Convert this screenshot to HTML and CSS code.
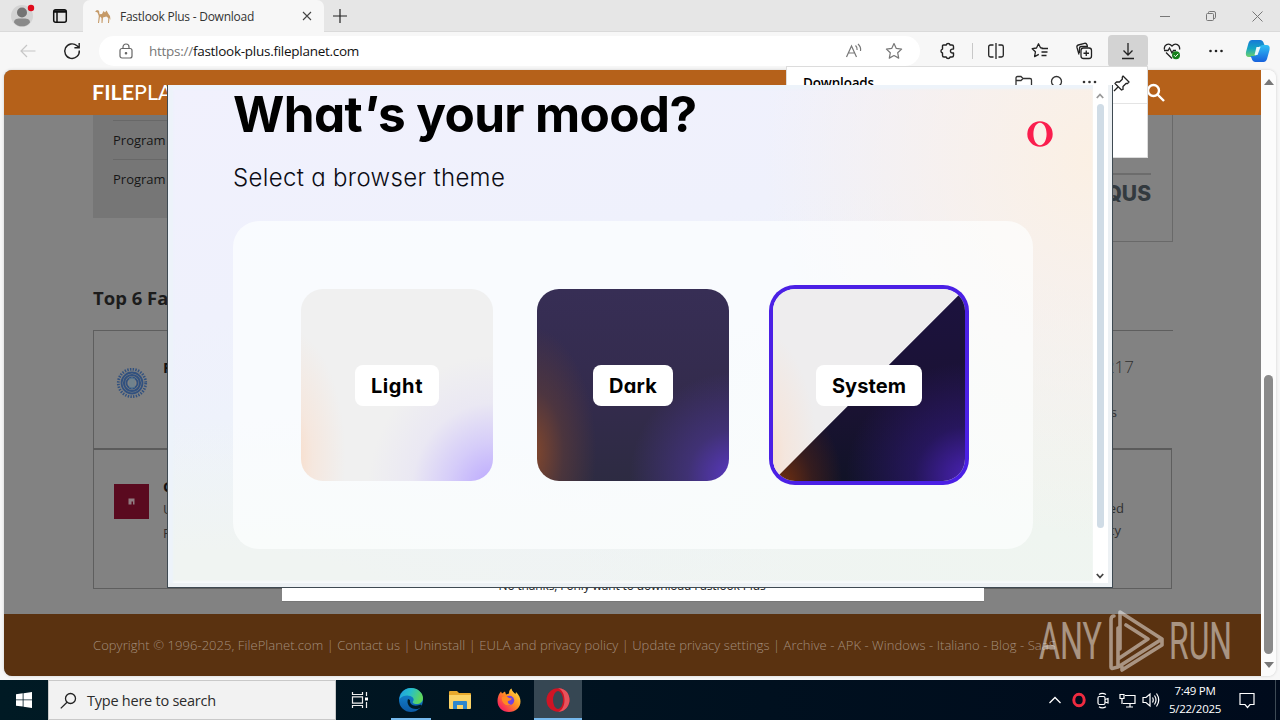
FILE: index.html
```html
<!DOCTYPE html>
<html lang="en">
<head>
<meta charset="utf-8">
<title>Fastlook Plus - Download</title>
<link rel="stylesheet" href="styles.css">
</head>
<body>
<div class="screen">
  <div class="browser">
    <div class="tabstrip">
      <div class="profile">
        <svg width="26" height="26" viewBox="0 0 26 26"><circle cx="13" cy="13" r="11" fill="#d3d3d3"/><circle cx="13" cy="9.500" r="5" fill="#747474"/><path d="M5 19.500c0-4 3.500-4 8-4s8 0 8 4c-2 3-5 3.800-8 3.800s-6-.8-8-3.800z" fill="#8a8a8a"/><circle cx="22" cy="5" r="3.200" fill="#e00b1c"/></svg>
      </div>
      <div class="workspaces">
        <svg width="16" height="16" viewBox="0 0 16 16" fill="none" stroke="#111" stroke-width="1.500"><rect x="1.700" y="1.700" width="12.600" height="12.600" rx="2"/><path d="M2 4h12M2 3h12M5 4v10"/></svg>
      </div>
      <div class="tab">
        <svg width="18" height="16" viewBox="0 0 18 16"><path d="M1 3.500L3 2l2 .8.500 3.500L8 6l1.500-3 1.500 1.500 1.500-2L14.500 6l1.500 2 .5 4-1-2-.5 5h-1l.3-5-2-1.500L9 9.500 8.500 15h-1V10L6 8.500 5 15H4l.8-7L3.500 4.500z" fill="#c59a68"/></svg>
        <span class="tab-title">Fastlook Plus - Download</span>
        <svg class="tab-close" width="10" height="10" viewBox="0 0 10 10" stroke="#444" stroke-width="1.100"><path d="M1 1l8 8M9 1L1 9"/></svg>
      </div>
      <svg class="newtab" width="14" height="14" viewBox="0 0 14 14" stroke="#222" stroke-width="1.200"><path d="M7 0v14M0 7h14"/></svg>
      <div class="wincontrols">
        <svg width="10" height="10" viewBox="0 0 10 10" stroke="#777"><path d="M0 5.500h10"/></svg>
        <svg width="10" height="10" viewBox="0 0 10 10" fill="none" stroke="#777"><rect x=".5" y="2.500" width="7" height="7" rx="1"/><path d="M2.500 2.500V1.500q0-1 1-1H8q1.500 0 1.500 1.500v4.500q0 1-1.500 1"/></svg>
        <svg width="11" height="11" viewBox="0 0 11 11" stroke="#777"><path d="M.5.5l10 10M10.500.5l-10 10"/></svg>
      </div>
    </div>

    <div class="toolbar">
      <svg class="back" width="16" height="14" viewBox="0 0 16 14" fill="none" stroke="#c6c6c6" stroke-width="1.200"><path d="M15.500 7H1M7 1L1 7l6 6"/></svg>
      <svg class="reload" width="18" height="18" viewBox="0 0 18 18" fill="none" stroke="#222" stroke-width="1.400"><path d="M16.300 8.500A7.300 7.300 0 1 1 14 3.800L16 5.600M16.200 1v4.800h-4.800"/></svg>
      <div class="address">
        <svg width="14" height="16" viewBox="0 0 14 16" fill="none" stroke="#666" stroke-width="1.200"><rect x="1" y="5.500" width="12" height="9.500" rx="2"/><path d="M4 5.500V4a3 3 0 0 1 6 0v1.500"/><circle cx="7" cy="10.200" r=".7" fill="#666"/></svg>
        <span class="url"><span class="scheme">https://</span>fastlook-plus.fileplanet.com</span>
        <svg class="aloud" width="18" height="16" viewBox="0 0 18 16" fill="none" stroke="#777" stroke-width="1.200"><path d="M1.500 14L6.500 3l5 11M3.300 10h6.400M10.500 2.500q2 1.800 1.600 4.500M13 1q3.300 3 2.500 7"/></svg>
        <svg width="18" height="18" viewBox="0 0 18 18" fill="none" stroke="#777" stroke-width="1.200" stroke-linejoin="round"><path d="M9 1.500l2.300 4.900 5.300.7-3.900 3.700 1 5.300L9 13.500l-4.700 2.600 1-5.300L1.400 7.100l5.300-.7z"/></svg>
      </div>
      <div class="tools">
        <span class="slot ext"><svg width="18" height="18" viewBox="0 0 18 18" fill="none" stroke="#222" stroke-width="1.400" stroke-linejoin="round"><path d="M4.500 3h2.700a2 2 0 0 1 3.900 0H13q1.500 0 1.500 1.500v2.600H13.400a1.900 1.900 0 0 0 0 3.900h1.100v2.500q0 1.500-1.500 1.500h-1.900a2 2 0 0 1-3.900 0H5q-1.500 0-1.500-1.500V11a2 2 0 0 1 0-3.900V4q0-1 1-1z"/></svg></span>
        <span class="divider"></span>
        <span class="slot"><svg width="18" height="18" viewBox="0 0 18 18" fill="none" stroke="#222" stroke-width="1.300"><path d="M6.500 3H3.500Q1.700 3 1.700 4.800v8.400Q1.700 15 3.500 15h3M11.500 3h3q1.800 0 1.800 1.800v8.400q0 1.800-1.800 1.800h-3M9 1v16"/></svg></span>
        <span class="slot"><svg width="18" height="18" viewBox="0 0 18 18" fill="none" stroke="#222" stroke-width="1.300" stroke-linejoin="round"><path d="M11.500 6L9.500 5.800 7.500 1.800 5.500 6 1.200 6.700l3.200 3.100-.8 4.800 4.200-2.200M10.500 6.500h6.500M10.500 10h6M10.500 13.500h5"/></svg></span>
        <span class="slot"><svg width="18" height="18" viewBox="0 0 18 18" fill="none" stroke="#222" stroke-width="1.300"><rect x="6" y="6" width="10.500" height="10.500" rx="2.500"/><path d="M11.250 8.500v5.500M8.500 11.250H14M4 12.500L2 5.500Q1.500 3.500 3.300 3L9.500 1.300Q11.300.9 12 2.800L12.300 4M4.500 11V6.500q0-2 2-2H13"/></svg></span>
        <span class="slot active"><svg width="16" height="18" viewBox="0 0 16 18" fill="none" stroke="#222" stroke-width="1.300"><path d="M8 1v12M3.500 8.500L8 13l4.500-4.500M2 16.500h12"/></svg></span>
        <span class="slot"><svg width="18" height="18" viewBox="0 0 18 18" fill="none" stroke="#222" stroke-width="1.300"><path d="M1.500 7.500C.5 3 5.500 0 9 4c3.500-4 8.500-1 7.500 3.500M1 8.500h4l1.500-2.500 2.500 5 1.500-2.500H13M3 10.500l6 6"/><circle cx="13" cy="13.200" r="4" fill="#16801b" stroke="none"/><path d="M11 13.200l1.500 1.500 2.700-2.900" stroke="#fff" stroke-width="1"/></svg></span>
        <span class="slot"><svg width="16" height="4" viewBox="0 0 16 4" fill="#222"><circle cx="2.500" cy="2" r="1.300"/><circle cx="8" cy="2" r="1.300"/><circle cx="13.500" cy="2" r="1.300"/></svg></span>
        <span class="slot copilot"><svg width="26" height="24" viewBox="0 0 26 24"><defs><linearGradient id="ca" x1="0" y1="0" x2="0" y2="1"><stop offset="0" stop-color="#1679d8"/><stop offset=".5" stop-color="#14a5c3"/><stop offset="1" stop-color="#6fd16a"/></linearGradient><linearGradient id="cb" x1="0" y1="0" x2="0" y2="1"><stop offset="0" stop-color="#2fc0f5"/><stop offset="1" stop-color="#1761dc"/></linearGradient></defs><path d="M7 1h8q3 0 4 4l1 2h-4q-2 0-3 3l-2 6q-1 2-4 2H4q-4 0-3-5L3.500 4Q4.500 1 7 1z" fill="url(#ca)"/><path d="M18.500 23h-8q-3 0-4-4l-1-2h4q2 0 3-3l2-6q1-2 4-2h3q4 0 3 5L22 20q-1 3-3.500 3z" fill="url(#cb)"/><path d="M11.500 8h4l-3 8h-3z" fill="#e9f8fb"/></svg></span>
      </div>
    </div>

    <div class="pagearea">
      <div class="page">
        <header class="site-header">
          <div class="logo"><b>FILE</b><span>PLA</span></div>
          <svg class="site-search" width="20" height="20" viewBox="0 0 20 20" fill="none" stroke="#fff" stroke-width="2.400"><circle cx="7.500" cy="7.500" r="5.500"/><path d="M11.500 11.500l6.500 6.500"/></svg>
        </header>
        <main class="content">
          <div class="toprow">
            <div class="specs"><p>Program</p><p>Program</p></div>
            <div class="comments"><div class="comments-inner"><span>DISQUS</span></div></div>
          </div>
          <h2 class="top6"><span>Top 6 Fa</span></h2>
          <div class="app-card first">
            <svg width="32" height="32" viewBox="0 0 32 32" fill="none" stroke="#31517f"><circle cx="16" cy="16" r="13.700" stroke-width="2.800" stroke-dasharray="1.400 1.300"/><circle cx="16" cy="16" r="10.500" stroke-width="1.800"/><circle cx="16" cy="16" r="8" stroke-width="2.200"/><circle cx="16" cy="16" r="5.500" stroke-width="1.800"/><path d="M14 11v10M16 10v12M18 11v10" stroke="#5f8297"/></svg>
            <div class="app-name"><b>F</b></div>
            <div class="app-side"><span class="count">217</span><span class="line">s</span></div>
          </div>
          <div class="app-card second">
            <svg width="35" height="35" viewBox="0 0 35 35"><path fill="#5a0a1f" d="M0 0h35v35H0z"/><path fill="#8f7b80" d="M14.500 14.500h6v6h-1.500v-3h-1.500v3h-3z"/></svg>
            <div class="app-name"><b>C</b><span>U</span><span>F</span></div>
            <div class="app-side"><span>ed</span><span class="ty">ty</span></div>
          </div>
        </main>
        <footer class="site-footer"><span>Copyright © 1996-2025, FilePlanet.com | Contact us | Uninstall | EULA and privacy policy | Update privacy settings | Archive - APK - Windows - Italiano - Blog - SaaS</span></footer>
      </div>
      <div class="scroll">
        <i class="tri up"></i>
        <i class="thumb"></i>
        <i class="tri down"></i>
      </div>
    </div>
  </div>

  <div class="taskbar">
    <div class="start"><svg width="16" height="16" viewBox="0 0 16 16" fill="#fff"><path d="M0 2.300L6.700 1.300v6.200H0zM7.500 1.200L16 0v7.500H7.500zM0 8.300h6.700v6.300L0 13.700zM7.500 8.300H16V16l-8.500-1.200z"/></svg></div>
    <div class="searchbox">
      <svg width="17" height="17" viewBox="0 0 17 17" fill="none" stroke="#222" stroke-width="1.300"><circle cx="10.500" cy="6.500" r="5"/><path d="M7 10.200L.8 16.400"/></svg>
      <span>Type here to search</span>
    </div>
    <div class="task view"><svg width="18" height="18" viewBox="0 0 18 18" fill="none" stroke="#eee" stroke-width="1.200"><path d="M1.500 1v2.500h10V1M1.500 17v-2.500h10V17M1.500 5.800h10v6.400h-10zM15.500 1v4M15.500 11v6"/><path d="M14 6.500h3v3h-3z" fill="#fff" stroke="none"/></svg></div>
    <div class="task open"><svg width="24" height="24" viewBox="0 0 24 24"><defs><linearGradient id="ea" x1="0" y1="0" x2="1" y2=".3"><stop offset="0" stop-color="#1f9de3"/><stop offset=".5" stop-color="#27bfca"/><stop offset="1" stop-color="#5ed65c"/></linearGradient><linearGradient id="eb" x1="0" y1="0" x2="0" y2="1"><stop offset="0" stop-color="#138cd7"/><stop offset="1" stop-color="#0c59a4"/></linearGradient></defs><circle cx="12" cy="12" r="12" fill="url(#eb)"/><path d="M.5 11C1.200 4.500 6 0 12 0c7 0 12 5 12 10 0 4-3 6-6.500 6-3 0-4.500-1.300-3.500-2.500 1-1.200.8-3-.2-4C11 6.500 4 6.500.5 11z" fill="url(#ea)"/><path d="M9 11c-2 5 2 10 8 10 2 0 3.800-.8 4.800-1.600C24 17.500 22 16 20.500 17 14 19 10.500 16 11 12z" fill="#001a24"/></svg></div>
    <div class="task plain"><svg width="22" height="20" viewBox="0 0 22 20"><path d="M0 2q0-1 1-1h7l2 2h11q1 0 1 1v14H0z" fill="#e8a92c"/><path d="M0 5h22v13q0 1-1 1H1q-1 0-1-1z" fill="#fbd367"/><path d="M4 19v-7q0-1 1-1h12q1 0 1 1v7h-4v-4H8v4z" fill="#2f87cd"/></svg></div>
    <div class="task plain"><svg width="24" height="24" viewBox="0 0 24 24"><defs><linearGradient id="fx" x1="1" y1="0" x2="0" y2="1"><stop offset="0" stop-color="#fff04a"/><stop offset=".45" stop-color="#ff9022"/><stop offset=".8" stop-color="#f92f55"/><stop offset="1" stop-color="#e31587"/></linearGradient></defs><path d="M2.500 5.500L4 3.500l1 2 3-2 1 3 3-1c0-3 1-4 2.500-5 .5 3 2.500 4 4 5.500L19 4c3 3 4.500 6 4.500 9.500C23.500 19.500 18.500 24 12 24S.5 19.500.5 13c0-3 .8-5.500 2-7.500z" fill="url(#fx)"/><circle cx="12.500" cy="12.500" r="4.700" fill="#7043df"/><path d="M5 9q4-2 7 1l3 .5q-1 2-4 2.500-1 3 3 3.500-5 2-7.500-1.500T5 9z" fill="#ff8a22"/></svg></div>
    <div class="task current"><svg width="24" height="24" viewBox="0 0 24 24"><ellipse cx="12" cy="12" rx="11.500" ry="11.800" fill="#cf1424"/><path d="M12 .2c9 0 11.500 7 11.500 11.800S20 23.800 12 23.800c4-1 6.500-6 6.500-11.800S16 1.500 12 .2z" fill="#e8535c"/><ellipse cx="12" cy="12" rx="5" ry="9" fill="#364753"/></svg></div>
    <div class="tray">
      <svg width="12" height="8" viewBox="0 0 12 8" fill="none" stroke="#fff" stroke-width="1.300"><path d="M.5 7L6 1.500 11.500 7"/></svg>
      <svg class="tray-opera" width="14" height="16" viewBox="0 0 14 16"><ellipse cx="7" cy="8" rx="5.200" ry="5.800" fill="none" stroke="#ef2b40" stroke-width="3"/></svg>
      <svg width="12" height="17" viewBox="0 0 12 17" fill="none" stroke="#fff" stroke-width="1.200"><rect x="1" y="4.500" width="7" height="8" rx="1.500"/><path d="M8 7.500l3-1v4.500l-3-1M2 2.500Q5 .3 9 2.500M2 14.700q3 2.200 7 0"/></svg>
      <svg class="tray-net" width="17" height="15" viewBox="0 0 17 15" fill="none" stroke="#fff" stroke-width="1.200"><path d="M6 2.500h10v8H4M1 1.500h4v4H1zM3 5.500V11M11 10.500V14M7 14h7"/></svg>
      <svg width="18" height="16" viewBox="0 0 18 16" fill="none" stroke="#fff" stroke-width="1.200"><path d="M1 5.500h3l4-3.500v12l-4-3.500H1zM10.500 5.500q1.500 2.500 0 5M12.500 3.500q3 4.500 0 9M14.500 1.500q4.500 6.500 0 13"/></svg>
      <div class="clock"><span>7:49 PM</span><span>5/22/2025</span></div>
      <svg width="16" height="17" viewBox="0 0 16 17" fill="none" stroke="#fff" stroke-width="1.200"><path d="M1 1.500h14v11h-4L8.500 15.500 6 12.500H1z"/></svg>
      <i class="peek"></i>
    </div>
  </div>

  <div class="offer"><span>No thanks, I only want to download Fastlook Plus</span></div>

  <div class="downloads">
    <div class="downloads-head">
      <strong>Downloads</strong>
      <svg width="18" height="16" viewBox="0 0 18 16" fill="none" stroke="#333" stroke-width="1.300"><path d="M1 14V3q0-1.500 1.500-1.500h3.500L8 3.500h7q1.500 0 1.500 1.500v9zM1 5.500h5l2-2"/></svg>
      <svg width="16" height="16" viewBox="0 0 16 16" fill="none" stroke="#333" stroke-width="1.300"><circle cx="7.500" cy="6.500" r="5"/><path d="M11 10l4 4"/></svg>
      <svg width="16" height="16" viewBox="0 0 16 16" fill="#333"><circle cx="3" cy="7" r="1.300"/><circle cx="8.500" cy="7" r="1.300"/><circle cx="14" cy="7" r="1.300"/></svg>
      <svg width="17" height="17" viewBox="0 0 17 17" fill="none" stroke="#222" stroke-width="1.300" stroke-linejoin="round"><path d="M10 1l6 6-1.500 1.500-1.500 0-3 3v3L8.500 15 2 8.500 3.500 7h3L9.300 4.200V2zM5 12L1 16"/></svg>
    </div>
  </div>

  <div class="opera-window">
    <div class="opera-page">
      <div class="opera-top">
        <div>
          <h1>What<span class="apos">'</span>s your mood?</h1>
          <p>Select a browser theme</p>
        </div>
        <svg class="opera-logo" width="26" height="26" viewBox="0 0 26 26"><path fill="#fa1e4e" fill-rule="evenodd" d="M13 .3a12.700 12.700 0 1 0 0 25.400a12.700 12.700 0 0 0 0-25.400zM13 1.800c3.800 0 6.600 5 6.600 11.200S16.800 24.200 13 24.200 6.400 19.200 6.400 13 9.200 1.800 13 1.800z"/></svg>
      </div>
      <div class="themes">
        <div class="theme light"><span>Light</span></div>
        <div class="theme dark"><span>Dark</span></div>
        <div class="theme system"><span>System</span></div>
      </div>
    </div>
    <div class="opera-scroll">
      <svg width="8" height="6" viewBox="0 0 8 6" fill="none" stroke="#999" stroke-width="1.800"><path d="M.8 5L4 1.500 7.200 5"/></svg>
      <i></i>
      <svg width="8" height="6" viewBox="0 0 8 6" fill="none" stroke="#444" stroke-width="1.800"><path d="M.8 1L4 4.500 7.200 1"/></svg>
    </div>
  </div>

  <svg class="watermark" width="210" height="72" viewBox="0 0 210 72">
    <text x="1" y="51" textLength="63" lengthAdjust="spacingAndGlyphs">ANY</text>
    <text x="131" y="51" textLength="63" lengthAdjust="spacingAndGlyphs">RUN</text>
    <g fill="none" stroke-width="3.600" stroke-linejoin="round" stroke-linecap="round"><path d="M82 41V4l42 27-44 28M76 8q-3 0-3 4v47q0 2 3 1l4-1V20M88 17l22 14L80 51M124 31v6L84 62v-3"/></g>
  </svg>
</div>
</body>
</html>
```
FILE: styles.css
```css
* { box-sizing: border-box; }
body { margin: 0; overflow: hidden; font-family: "Open Sans", "Noto Sans", sans-serif; }
svg { display: block; flex: none; }
h1, h2, p { margin: 0; }

.screen { position: relative; width: 1280px; height: 720px; display: flex; flex-direction: column; overflow: hidden; }
.browser { height: 680px; display: flex; flex-direction: column; background: #f7f7f7; }

/* Tab strip */
.tabstrip { height: 32px; display: flex; align-items: center; background: #e6e6e6; box-shadow: inset 0 -1px #dadada; }
.profile { margin-left: 9px; }
.workspaces { margin-left: 17px; }
.tab { width: 241px; height: 32px; margin-left: 15px; padding-left: 11px; display: flex; align-items: center; gap: 8px; background: #f7f7f7; border-radius: 7px 7px 0 0; }
.tab-title { font-size: 12px; letter-spacing: -.25px; color: #333; white-space: nowrap; }
.tab-close { margin-left: auto; margin-right: 12px; }
.newtab { margin-left: 9px; }
.wincontrols { margin-left: auto; margin-right: 17px; display: flex; align-items: center; gap: 36px; }

/* Toolbar */
.toolbar { height: 38px; display: flex; align-items: center; }
.back { margin-left: 20px; }
.reload { margin-left: 27px; }
.address { width: 821px; height: 30px; margin-left: 18px; padding: 0 17px 0 20px; display: flex; align-items: center; background: #fff; border-radius: 15px; }
.url { margin-left: 16px; font-size: 13.500px; letter-spacing: -.27px; color: #111; white-space: nowrap; }
.scheme { color: #777; }
.aloud { margin-left: auto; margin-right: 22px; }
.tools { flex: 1; display: flex; align-items: center; justify-content: flex-end; }
.slot { width: 44px; height: 32px; display: flex; align-items: center; justify-content: center; }
.slot.ext { width: 36px; margin-right: 6px; }
.divider { width: 1px; height: 16px; background: #c8c8c8; margin-right: 1px; }
.slot.active { width: 40px; margin: 0 2px; background: #d3d3d3; border-radius: 4px; }
.slot.copilot { width: 42px; padding-right: 2px; }

/* Web page */
.pagearea { height: 606px; margin: 0 4px; display: flex; border-radius: 8px; overflow: hidden; background: #fcfcfc; box-shadow: 0 0 3px #ccc; }
.page { width: 1257px; display: flex; flex-direction: column; background: #828282; }
.site-header { height: 45px; padding: 0 95px 0 88px; display: flex; align-items: center; justify-content: space-between; background: #b5611a; }
.logo { display: flex; font: 21.500px/1 Lato, sans-serif; color: #fff; }
.content { height: 499px; padding: 0 88px 0 89px; }
.toprow { height: 127px; display: flex; justify-content: space-between; }
.specs { width: 500px; height: 103px; padding: 5px 20px 0; background: #767676; }
.specs p { height: 39px; padding-top: 9px; border-top: 1px solid #686868; font-size: 13px; line-height: 20px; color: #161616; }
.comments { width: 560px; padding: 58px 21px 0 0; border: solid #696969; border-width: 0 1px 1px 0; }
.comments-inner { border-top: 2px solid #6c6c6c; text-align: right; font: 800 21px/38px Inter, sans-serif; color: #333a3f; }
.top6 { height: 88px; padding-top: 43px; font-size: 18.500px; line-height: 26px; color: #1c1c1c; }
.app-card { display: flex; border: 1px solid #5e5e5e; color: #303030; }
.app-card.first { height: 118px; padding: 36px 39px 0 22px; border-right: 0; border-bottom: 0; }
.app-card.second { width: 1079px; height: 141px; padding: 34px 47px 0 20px; border-top: 2px solid #5b5b5b; }
.app-name { margin-left: 14px; display: flex; flex-direction: column; font-size: 13px; line-height: 24px; }
.app-name b { font-size: 15px; line-height: 22px; color: #111; margin-top: -11px; }
.second .app-name b { margin-top: -9px; }
.first .app-name { margin-left: 15px; }
.app-side { margin-left: auto; display: flex; flex-direction: column; align-items: flex-end; font-size: 13px; line-height: 22px; }
.second .app-side { padding-top: 13px; }
.second .app-side .ty { padding-right: 3px; }
.count { font-size: 17px; font-weight: 300; margin-top: -11px; }
.line { margin-top: 23px; padding-right: 17px; }
.site-footer { height: 62px; padding-left: 89px; display: flex; align-items: center; background: #5a3210; color: #a38e7c; font-size: 13px; font-weight: 300; letter-spacing: .06px; white-space: nowrap; }
.scroll { width: 15px; padding: 9px 0 8px; display: flex; flex-direction: column; align-items: center; background: #fcfcfc; }
.tri { border: 5px solid transparent; }
.tri.up { border-top: 0; border-bottom: 6px solid #777; }
.tri.down { border-bottom: 0; border-top: 6px solid #777; margin-top: 8px; }
.thumb { width: 9px; height: 279px; margin-top: auto; border-radius: 5px; background: #8a8a8a; }

/* Taskbar */
.taskbar { height: 40px; display: flex; align-items: stretch; background: linear-gradient(90deg, #001a24, #00101f 60%, #000b1c); color: #fff; }
.start { width: 48px; display: flex; align-items: center; justify-content: center; }
.searchbox { width: 288px; padding-left: 11px; display: flex; align-items: center; gap: 10px; background: #f2f2f2; border: 1px solid #c9c9c9; color: #2c2c2c; font-size: 14.500px; letter-spacing: -.24px; white-space: nowrap; }
.task { width: 49px; display: flex; align-items: center; justify-content: center; }
.task.view { width: 50px; padding-right: 3px; }
.task.open { box-shadow: inset 0 -2px #76b9ed; width: 40px; margin: 0 5px; }
.task.plain { padding-right: 2px; }
.task.current { width: 48px; background: #364753; box-shadow: inset 0 -2px #76b9ed; }
.tray { flex: 1; display: flex; align-items: center; justify-content: flex-end; }
.tray-opera { margin: 0 11px; }
.tray-net { margin: 0 6px 0 10px; }
.clock { width: 52px; margin: 0 18px 0 9px; display: flex; flex-direction: column; align-items: center; font-size: 11.500px; line-height: 18px; letter-spacing: -.25px; white-space: nowrap; }
.peek { width: 1px; height: 40px; background: #3d4a55; margin: 0 4px 0 20px; }

/* Offer dialog behind the installer */
.offer { position: absolute; left: 282px; top: 560px; width: 702px; height: 42px; padding: 17px 2px 0 0; background: #fff; color: #222; text-align: center; font-size: 12px; line-height: 18px; letter-spacing: -.135px; border-bottom: 1px solid #777; }

/* Downloads flyout */
.downloads { position: absolute; left: 786px; top: 66px; width: 362px; height: 92px; background: #fff; border: 1px solid #dcdcdc; }
.downloads-head { height: 37px; padding: 0 17px 4px 16px; display: flex; align-items: center; gap: 16px; border-bottom: 1px solid #e4e4e4; font-size: 13.500px; letter-spacing: -.17px; }
.downloads-head strong { margin-right: auto; font-weight: 600; }

/* Opera installer */
.opera-window { position: absolute; left: 167px; top: 85px; width: 946px; height: 503px; display: flex; padding: 0 4px 4px 0; border: 1px solid #3f4a52; border-top: 0; background: #edf1f4; }
.opera-page { width: 925px; padding: 0 60px 0 65px; box-shadow: inset 5px 4px 2px #edf3fa, inset 0 -2px 2px #f7fafb;
  background: radial-gradient(ellipse 330px 380px at 100% 15%, #fbf0e4 0, #faf0e8aa 45%, #faf0e800 100%),
    radial-gradient(ellipse 500px 260px at 95% 90%, #eff5f0 0, #eff5f000 100%),
    radial-gradient(ellipse 600px 190px at 5% 105%, #f0f4f2 30%, #f0f4f200 100%),
    linear-gradient(168deg, #f1f1fd 0, #eff1fc 35%, #edf3fa 65%, #f0f4f3 90%); }
.opera-top { height: 136px; display: flex; justify-content: space-between; }
.opera-top h1 { height: 60px; font: 700 49.500px/59px Inter, sans-serif; font-feature-settings: "cv11"; letter-spacing: -.65px; color: #000; white-space: nowrap; }
.apos { display: inline-block; transform: skewX(-10deg); }
.opera-top p { padding-top: 17px; font: 300 24px/32px Inter, sans-serif; font-feature-settings: "cv11"; letter-spacing: .33px; color: #0c0c14; white-space: nowrap; }
.opera-logo { margin-top: 36px; margin-right: -20px; }
.themes { width: 800px; height: 328px; padding: 68px; display: flex; gap: 44px; border-radius: 26px; background: rgba(253, 255, 255, .68); }
.theme { width: 192px; height: 192px; display: flex; align-items: center; justify-content: center; border-radius: 22px; }
.theme span { height: 41px; padding: 1px 16px 0; border-radius: 8px; background: #fff; color: #000; font: 700 20px/41px Inter, sans-serif; font-feature-settings: "cv11"; }
.light span { letter-spacing: .6px; }
.dark span { letter-spacing: .25px; }
.light { background: radial-gradient(ellipse 125px 135px at 100% 105%, #b8a4ff 0, #c9bcfdb0 35%, #ddd6f950 65%, #f0f0f000 100%), radial-gradient(ellipse 60px 130px at -8% 88%, #fad8c0 0, #f8e2d4a0 45%, #f0f0f000 100%), #f0f0f0; }
.dark { background: radial-gradient(ellipse 105px 105px at 103% 98%, #5a38c4 0, #4a3590a0 45%, #372e5500 100%), radial-gradient(ellipse 65px 125px at -3% 85%, #85482c 0, #5c3b38a0 50%, #332b4c00 100%), linear-gradient(#372e55, #332b4c 60%, #2d2b42); }
.theme.system { position: relative; box-shadow: 0 0 0 4px #4b20e5; background: linear-gradient(135deg, #eeedee 49.800%, #eeedee00 50.100%), radial-gradient(ellipse 125px 115px at 103% 98%, #4b22b8 0, #33198090 45%, #1a123300 100%), radial-gradient(ellipse 60px 85px at 5% 102%, #702f10 0, #4a2218a0 50%, #11132700 100%), linear-gradient(#1c123f, #1a1233 60%, #111327); }
.theme.system::before { content: ""; position: absolute; inset: 0; border-radius: 22px; clip-path: polygon(0 0, 100% 0, 0 100%); background: radial-gradient(ellipse 60px 130px at -8% 88%, #fad8c0 0, #f8e2d4a0 45%, #eeedee00 100%); }
.theme.system span { position: relative; font-feature-settings: normal; letter-spacing: .1px; }
.opera-scroll { width: 15px; padding: 8px 1px 4px 0; display: flex; flex-direction: column; align-items: center; background: #fff; }
.opera-scroll i { width: 7px; height: 424px; margin: 5px 0 auto; border-radius: 4px; background: #d0dce6; }

.watermark { position: absolute; left: 1038px; top: 608px; opacity: .48; }
.watermark text { font: 400 52px Roboto, sans-serif; fill: #fff; }
.watermark g { stroke: #fff; }
```
